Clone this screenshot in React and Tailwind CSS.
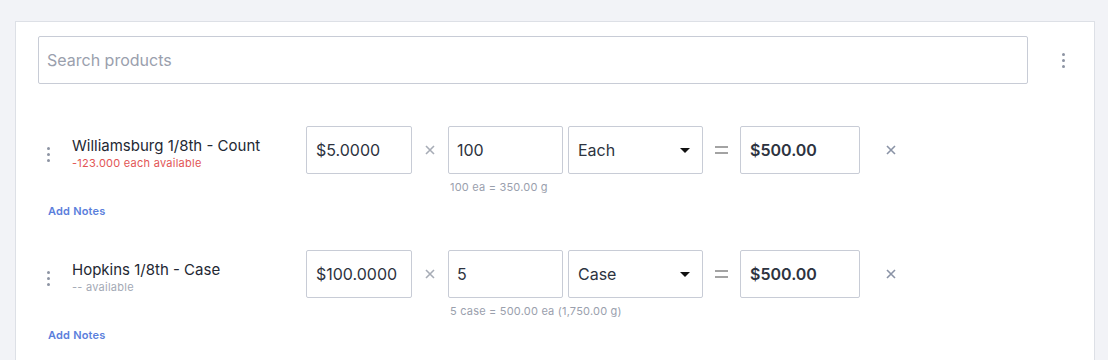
const items = [
  {
    name: "Williamsburg 1/8th - Count",
    avail: "-123.000 each available",
    availClass: "text-[#e25555]",
    price: "$5.0000",
    qty: "100",
    unit: "Each",
    total: "$500.00",
    hint: "100 ea = 350.00 g",
  },
  {
    name: "Hopkins 1/8th - Case",
    avail: "-- available",
    availClass: "text-[#a3a9b5]",
    price: "$100.0000",
    qty: "5",
    unit: "Case",
    total: "$500.00",
    hint: "5 case = 500.00 ea (1,750.00 g)",
  },
];

function Dots({ className }) {
  return (
    <div className={"flex flex-col items-center gap-[3px] " + className}>
      <span className="w-[3px] h-[3px] rounded-full bg-[#8d94a3]" />
      <span className="w-[3px] h-[3px] rounded-full bg-[#8d94a3]" />
      <span className="w-[3px] h-[3px] rounded-full bg-[#8d94a3]" />
    </div>
  );
}

function Times({ className }) {
  return (
    <svg width="10" height="10" viewBox="0 0 10 10" className={className}>
      <path d="M1 1L9 9M9 1L1 9" stroke="currentColor" strokeWidth="1.6" />
    </svg>
  );
}

function LineItem({ item }) {
  return (
    <div>
      <div className="flex items-center h-[48px]">
        <div className="w-[20px] flex justify-center">
          <Dots className="mt-[8px]" />
        </div>
        <div className="ml-[14px] mt-[6px] w-[234px] flex flex-col">
          <span className="text-[15px] leading-[20px] text-[#232833]">{item.name}</span>
          <span className={"text-[11px] leading-[14px] tracking-[0.25px] " + item.availClass}>{item.avail}</span>
        </div>
        <div className="w-[106px] h-[48px] border border-[#c8ccd6] rounded-[2px] flex items-center px-[9px] text-[16px] text-[#2d3340]">
          {item.price}
        </div>
        <div className="w-[36px] flex justify-center text-[#a7acb6]">
          <Times />
        </div>
        <div className="w-[115px] h-[48px] border border-[#c8ccd6] rounded-[2px] flex items-center px-[8px] text-[16px] text-[#2d3340]">
          {item.qty}
        </div>
        <div className="ml-[5px] w-[135px] h-[48px] border border-[#c8ccd6] rounded-[2px] flex items-center justify-between pl-[9px] pr-[12px] text-[16px] text-[#2d3340]">
          <span>{item.unit}</span>
          <span className="w-0 h-0 border-l-[5px] border-r-[5px] border-t-[5px] border-l-transparent border-r-transparent border-t-[#111]" />
        </div>
        <div className="w-[37px] flex flex-col items-center gap-[4px]">
          <span className="w-[13px] h-[2px] bg-[#a3a3a3]" />
          <span className="w-[13px] h-[2px] bg-[#a3a3a3]" />
        </div>
        <div className="w-[120px] h-[48px] border border-[#c8ccd6] rounded-[2px] flex items-center px-[9px] text-[16px] font-semibold text-[#2d3340]">
          {item.total}
        </div>
        <div className="w-[62px] flex justify-center text-[#8a93a6]">
          <Times />
        </div>
      </div>
      <div className="ml-[412px] mt-[6px] text-[11px] leading-[14px] tracking-[0.2px] text-[#9aa0ad]">{item.hint}</div>
      <div className="ml-[10px] mt-[10px] text-[11px] leading-[14px] font-semibold tracking-[0.2px] text-[#5b7fdc]">Add Notes</div>
    </div>
  );
}

export default function App() {
  return (
    <div className="w-[1108px] h-[360px] bg-[#f2f3f7] pt-[21px] pl-[15px] overflow-hidden font-['Inter',sans-serif]">
      <div className="w-[1080px] h-[400px] bg-white border border-[#dde0e6] pl-[22px] pt-[14px]">
        <div className="flex items-center">
          <div className="w-[990px] h-[48px] border border-[#c8ccd6] rounded-[2px] flex items-center px-[8px] text-[16px] text-[#9aa0ad]">
            Search products
          </div>
          <Dots className="ml-[34px]" />
        </div>
        <div className="mt-[42px] flex flex-col gap-[32px]">
          {items.map((item) => (
            <LineItem key={item.name} item={item} />
          ))}
        </div>
      </div>
    </div>
  );
}
